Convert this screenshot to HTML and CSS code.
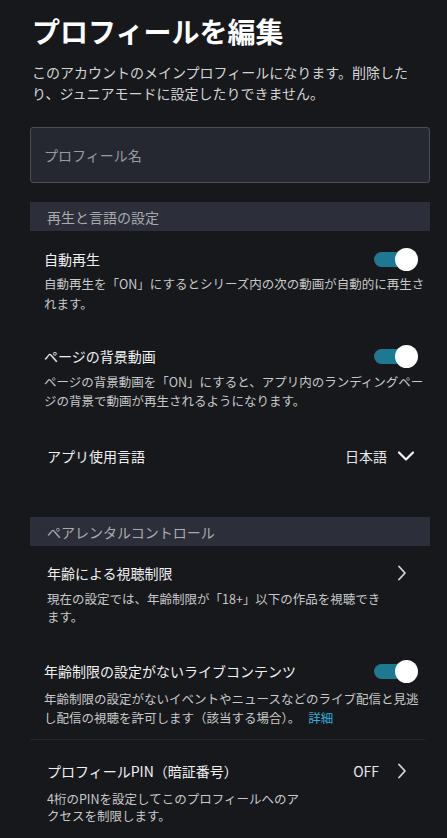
FILE: index.html
```html
<!DOCTYPE html>
<html lang="ja">
<head>
<meta charset="utf-8">
<link rel="stylesheet" href="styles.css">
</head>
<body>
<div class="page">
  <h1 class="title">プロフィールを編集</h1>
  <p class="lead">このアカウントのメインプロフィールになります。削除したり、ジュニアモードに設定したりできません。</p>
  <div class="input">プロフィール名</div>

  <div class="section">再生と言語の設定</div>

  <div class="item item-toggle first">
    <div class="item-head">
      <span class="item-title">自動再生</span>
      <span class="toggle"><span class="track"></span><span class="knob"></span></span>
    </div>
    <p class="desc">自動再生を「ON」にするとシリーズ内の次の動画が自動的に再生されます。</p>
  </div>

  <div class="item item-toggle second">
    <div class="item-head">
      <span class="item-title">ページの背景動画</span>
      <span class="toggle"><span class="track"></span><span class="knob"></span></span>
    </div>
    <p class="desc">ページの背景動画を「ON」にすると、アプリ内のランディングページの背景で動画が再生されるようになります。</p>
  </div>

  <div class="item item-nav lang">
    <div class="item-head">
      <span class="item-title">アプリ使用言語</span>
      <span class="value value-lang">日本語
        <svg class="chev-down" width="18" height="12" viewBox="0 0 18 12"><path d="M2 2.5 L9 9.5 L16 2.5" fill="none" stroke="#f2f2f2" stroke-width="2.2" stroke-linecap="round" stroke-linejoin="round"/></svg>
      </span>
    </div>
  </div>

  <div class="section section2">ペアレンタルコントロール</div>

  <div class="item item-nav age">
    <div class="item-head">
      <span class="item-title">年齢による視聴制限</span>
      <svg class="chev-right" width="10" height="16" viewBox="0 0 10 16"><path d="M2 1.5 L8 8 L2 14.5" fill="none" stroke="#d8d8d8" stroke-width="1.8" stroke-linecap="round" stroke-linejoin="round"/></svg>
    </div>
    <p class="desc">現在の設定では、年齢制限が「18+」以下の作品を視聴できます。</p>
  </div>

  <div class="item item-toggle live">
    <div class="item-head">
      <span class="item-title">年齢制限の設定がないライブコンテンツ</span>
      <span class="toggle"><span class="track"></span><span class="knob"></span></span>
    </div>
    <p class="desc">年齢制限の設定がないイベントやニュースなどのライブ配信と見逃し配信の視聴を許可します（該当する場合）。<span class="link">詳細</span></p>
  </div>

  <div class="divider"></div>

  <div class="item item-nav pin">
    <div class="item-head">
      <span class="item-title">プロフィールPIN（暗証番号）</span>
      <span class="value value-pin">OFF
        <svg class="chev-right" width="10" height="16" viewBox="0 0 10 16"><path d="M2 1.5 L8 8 L2 14.5" fill="none" stroke="#d8d8d8" stroke-width="1.8" stroke-linecap="round" stroke-linejoin="round"/></svg>
      </span>
    </div>
    <p class="desc">4桁のPINを設定してこのプロフィールへのアクセスを制限します。</p>
  </div>
</div>
</body>
</html>
```

FILE: styles.css
```css
html, body {
  margin: 0;
  padding: 0;
  background: #16181c;
}
body {
  font-family: "Noto Sans CJK JP", "Noto Sans", sans-serif;
  color: #eeeeee;
  width: 447px;
  height: 838px;
  overflow: hidden;
}
.page {
  padding: 0 17px 0 30px;
}
.title {
  margin: 13px 0 0 2px;
  font-size: 28px;
  line-height: 36px;
  font-weight: 700;
  color: #ffffff;
}
.lead {
  margin: 13px 0 0 2px;
  font-size: 14px;
  line-height: 21px;
  color: #d4d4d4;
  width: 390px;
}
.input {
  margin-top: 23px;
  height: 54px;
  border: 1px solid #4a4d55;
  border-radius: 3px;
  background: #252830;
  display: flex;
  align-items: center;
  padding-left: 13px;
  font-size: 14px;
  color: #9a9ca2;
}
.section {
  margin-top: 19px;
  height: 29px;
  background: #2c2f39;
  display: flex;
  align-items: center;
  padding-left: 17px;
  font-size: 14px;
  color: #a9abb0;
}
.section2 {
  margin-top: 50px;
}
.item {
  padding-right: 12px;
}
.item-toggle {
  padding-left: 14px;
}
.item-nav {
  padding-left: 17px;
  padding-right: 23px;
}
.item-head {
  display: flex;
  align-items: center;
  justify-content: space-between;
  height: 22px;
}
.item-title {
  font-size: 14px;
  color: #f0f0f0;
}
.desc {
  margin: 4px -8px 0 0;
  font-size: 12.5px;
  line-height: 20px;
  color: #c8c8c8;
}
.first { margin-top: 17px; }
.second { margin-top: 31px; }
.second .desc { line-height: 19px; margin-top: 5px; }
.lang { margin-top: 35px; padding-right: 15px; }
.age { margin-top: 16px; }
.age .desc { margin: 6px 0 0 0; line-height: 18px; width: 343px; }
.live { margin-top: 34px; }
.live .desc { margin-top: 7px; line-height: 19px; }
.divider {
  margin-top: 12px;
  height: 1px;
  background: #23262c;
  margin-right: 5px;
}
.pin { margin-top: 20px; }
.pin .desc { margin: 8px 0 0 0; line-height: 17px; width: 256px; }
.toggle {
  position: relative;
  width: 44px;
  height: 23px;
  flex: none;
}
.track {
  position: absolute;
  left: 0;
  top: 4px;
  width: 34px;
  height: 15px;
  border-radius: 8px;
  background: #1d7891;
}
.knob {
  position: absolute;
  right: 0;
  top: 0;
  width: 23px;
  height: 23px;
  border-radius: 50%;
  background: #ffffff;
}
.value {
  display: flex;
  align-items: center;
  font-size: 14px;
  color: #e8e8e8;
}
.value-lang { gap: 10px; }
.value-pin { gap: 18px; }
.chev-right {
  flex: none;
}
.link {
  display: inline-block;
  color: #33aed6;
  margin-left: 8px;
}
```
